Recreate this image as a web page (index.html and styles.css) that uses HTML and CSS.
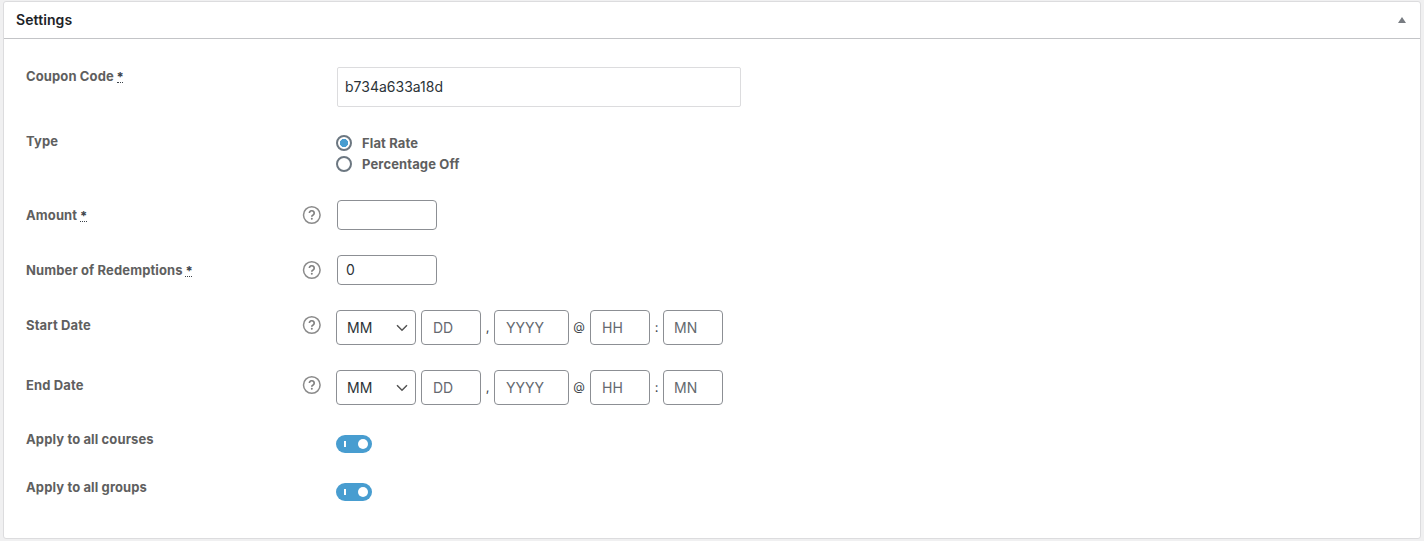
FILE: index.html
```html
<!DOCTYPE html>
<html lang="en">
<head>
    <meta charset="utf-8">
    <title>Settings</title>
    <link rel="stylesheet" href="styles.css">
</head>
<body>
    <div class="postbox">
        <div class="postbox-header">
            <h2>Settings</h2>
            <svg class="toggle-indicator" width="8" height="6" viewBox="0 0 8 6"><path d="M4 0L8 6H0z" fill="#787c82"/></svg>
        </div>
        <div class="inside">
            <div class="row">
                <label class="label">Coupon Code <abbr>*</abbr></label>
                <span class="help"></span>
                <div class="field inset">
                    <input class="input-code" type="text" value="b734a633a18d">
                </div>
            </div>

            <div class="row">
                <label class="label">Type</label>
                <span class="help"></span>
                <div class="field radios">
                    <label class="radio"><input type="radio" name="type" checked><span>Flat Rate</span></label>
                    <label class="radio"><input type="radio" name="type"><span>Percentage Off</span></label>
                </div>
            </div>

            <div class="row centered">
                <label class="label">Amount <abbr>*</abbr></label>
                <span class="help"><svg width="20" height="20" viewBox="0 0 20 20"><use href="#help-icon"/></svg></span>
                <div class="field inset">
                    <input class="input-small" type="text">
                </div>
            </div>

            <div class="row centered">
                <label class="label">Number of Redemptions <abbr>*</abbr></label>
                <span class="help"><svg width="20" height="20" viewBox="0 0 20 20"><use href="#help-icon"/></svg></span>
                <div class="field inset">
                    <input class="input-small" type="text" value="0">
                </div>
            </div>

            <div class="row centered">
                <label class="label">Start Date</label>
                <span class="help"><svg width="20" height="20" viewBox="0 0 20 20"><use href="#help-icon"/></svg></span>
                <div class="field date">
                    <select class="month"><option>MM</option></select>
                    <input class="day" type="text" placeholder="DD">
                    <span class="sep">,</span>
                    <input class="year" type="text" placeholder="YYYY">
                    <span class="sep at">@</span>
                    <input class="hour" type="text" placeholder="HH">
                    <span class="sep">:</span>
                    <input class="minute" type="text" placeholder="MN">
                </div>
            </div>

            <div class="row centered">
                <label class="label">End Date</label>
                <span class="help"><svg width="20" height="20" viewBox="0 0 20 20"><use href="#help-icon"/></svg></span>
                <div class="field date">
                    <select class="month"><option>MM</option></select>
                    <input class="day" type="text" placeholder="DD">
                    <span class="sep">,</span>
                    <input class="year" type="text" placeholder="YYYY">
                    <span class="sep at">@</span>
                    <input class="hour" type="text" placeholder="HH">
                    <span class="sep">:</span>
                    <input class="minute" type="text" placeholder="MN">
                </div>
            </div>

            <div class="row">
                <label class="label">Apply to all courses</label>
                <span class="help"></span>
                <div class="field"><span class="switch"></span></div>
            </div>

            <div class="row">
                <label class="label">Apply to all groups</label>
                <span class="help"></span>
                <div class="field"><span class="switch"></span></div>
            </div>
        </div>
    </div>

    <svg class="symbols" width="0" height="0">
        <symbol id="help-icon" viewBox="0 0 20 20">
            <circle cx="9.8" cy="10" r="8.3" fill="none" stroke="#8b8b8b" stroke-width="1.5"/>
            <path d="M7.4 8.1a2.4 2.3 0 1 1 3.7 1.9c-.9.5-1.3.9-1.3 1.8" fill="none" stroke="#808080" stroke-width="1.7"/>
            <circle cx="9.8" cy="13.8" r="1" fill="#808080"/>
        </symbol>
    </svg>
</body>
</html>
```

FILE: styles.css
```css
* {
    box-sizing: border-box;
}
body {
    margin: 0;
    padding: 1px 3px 2px;
    background-color: #f0f0f1;
    font-family: Inter, sans-serif;
    font-size: 13px;
    color: #3c434a;
}
.postbox {
    width: 1418px;
    height: 538px;
    background-color: #fff;
    border: 1px solid #dcdcde;
    border-radius: 3px;
}
.postbox-header {
    display: flex;
    justify-content: space-between;
    align-items: center;
    height: 37px;
    padding: 0 14px 0 12px;
    border-bottom: 1px solid #c3c4c7;
}
.postbox-header h2 {
    margin: 0;
    padding-bottom: 2px;
    font-size: 14px;
    font-weight: 600;
    letter-spacing: 0.08px;
    color: #1d2327;
}
.toggle-indicator {
    display: block;
    margin-bottom: 1px;
}
.inside {
    display: flex;
    flex-direction: column;
    gap: 25px;
    padding: 28px 22px 0;
}
.row {
    display: grid;
    grid-template-columns: 276px 34px 1fr;
    align-items: start;
}
.label {
    line-height: 19px;
    font-weight: 700;
    letter-spacing: 0.12px;
    color: #5f5f5f;
}
.label abbr {
    display: inline-block;
    height: 16px;
    line-height: 20px;
    margin-left: -0.5px;
    letter-spacing: -0.7px;
    color: #3c434a;
    border-bottom: 1px dotted #3c434a;
    vertical-align: top;
}
.centered .label {
    padding-top: 6px;
}
.help svg {
    display: block;
    margin-top: 5px;
}
.inset {
    padding-left: 1px;
}
input,
select {
    display: block;
    margin: 0;
    font-family: inherit;
    font-size: 14px;
    color: #2c3338;
    background-color: #fff;
    border: 1px solid #8c8f94;
    border-radius: 4px;
    outline: none;
}
input::placeholder {
    color: #646970;
    opacity: 1;
}
.input-code {
    width: 404px;
    height: 40px;
    padding: 0 7px 2px;
    border-color: #dcdcde;
    border-radius: 2px;
}
.input-small {
    width: 100px;
    height: 30px;
    padding: 0 8px 1px;
}
.radios {
    display: flex;
    flex-direction: column;
    gap: 5px;
    padding: 3px 0;
}
.radio {
    display: flex;
    align-items: center;
    gap: 10px;
    height: 16px;
    font-weight: 700;
    letter-spacing: 0.12px;
    color: #5f5f5f;
}
.radio input {
    appearance: none;
    width: 16px;
    height: 16px;
    border: 2px solid #6c7781;
    border-radius: 50%;
}
.radio input:checked {
    background: radial-gradient(circle, #489dd0 3.8px, #fff 4.4px);
}
.date {
    display: flex;
    align-items: center;
}
.date input,
.date select {
    height: 35px;
    padding: 0 11px 1px;
}
.date .month {
    appearance: none;
    width: 80px;
    margin-right: 5px;
    padding: 0 10px 1px;
    background: #fff url("data:image/svg+xml,%3Csvg xmlns='http://www.w3.org/2000/svg' width='12' height='8' viewBox='0 0 12 8'%3E%3Cpath d='M1 1.2l5 5 5-5' fill='none' stroke='%23555' stroke-width='1.5'/%3E%3C/svg%3E") no-repeat right 7px top 13px;
}
.day,
.hour,
.minute {
    width: 60px;
}
.date .minute {
    padding-left: 10px;
}
.year {
    width: 75px;
}
.sep {
    width: 13px;
    padding-bottom: 1px;
    line-height: 19px;
    text-align: center;
}
.at {
    width: 21px;
    padding-bottom: 2px;
    padding-right: 1px;
    font-size: 12px;
}
.switch {
    display: flex;
    align-items: center;
    justify-content: space-between;
    width: 36px;
    height: 18px;
    margin-top: 5px;
    padding: 0 4px 0 8px;
    border-radius: 9px;
    background-color: #489dd0;
}
.switch::before {
    content: "";
    width: 2px;
    height: 6px;
    background-color: #fff;
}
.switch::after {
    content: "";
    width: 10px;
    height: 10px;
    border-radius: 50%;
    background-color: #fff;
}
.symbols {
    display: block;
}
```
